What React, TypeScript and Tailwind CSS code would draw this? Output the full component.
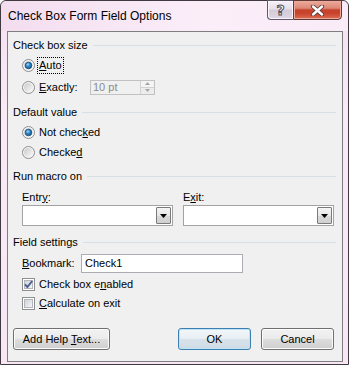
import React from "react";

function Radio({ checked, id }: { checked?: boolean; id: string }) {
  return (
    <svg width="13" height="13" viewBox="0 0 13 13" className="shrink-0">
      <defs>
        <linearGradient id={`rg${id}`} x1="0" y1="0" x2="1" y2="1">
          <stop offset="0" stopColor="#c9c9c9" />
          <stop offset="1" stopColor="#fbfbfb" />
        </linearGradient>
        <radialGradient id={`rd${id}`} cx="0.4" cy="0.35" r="0.7">
          <stop offset="0" stopColor="#9fdcfb" />
          <stop offset="0.45" stopColor="#2e86c8" />
          <stop offset="1" stopColor="#125589" />
        </radialGradient>
      </defs>
      <circle cx="6.5" cy="6.5" r="6" fill="#f5f5f5" stroke="#8d8d8d" />
      <circle cx="6.5" cy="6.5" r="4.6" fill={`url(#rg${id})`} />
      {checked && (
        <circle cx="6.5" cy="6.5" r="3.3" fill={`url(#rd${id})`} stroke="#1b4a73" strokeWidth="0.8" />
      )}
    </svg>
  );
}

function Check({ checked, id }: { checked?: boolean; id: string }) {
  return (
    <svg width="13" height="13" viewBox="0 0 13 13" className="shrink-0">
      <defs>
        <linearGradient id={`cg${id}`} x1="0" y1="0" x2="1" y2="1">
          <stop offset="0" stopColor="#cdd1d6" />
          <stop offset="1" stopColor="#f7f7f7" />
        </linearGradient>
      </defs>
      <rect x="0.5" y="0.5" width="12" height="12" fill="#ffffff" stroke="#8e8f8f" />
      <rect x="2.5" y="2.5" width="8" height="8" fill={`url(#cg${id})`} stroke="#b3b7bd" />
      {checked && (
        <path d="M3 6.3 L5.4 9 L10.2 3" fill="none" stroke="#4a5f8f" strokeWidth="1.9" />
      )}
    </svg>
  );
}

function Header({ text, mt }: { text: string; mt: string }) {
  return (
    <div className={`flex items-center h-[16px] pl-[5px] pr-[6px] ${mt}`}>
      <span className="text-black whitespace-nowrap">{text}</span>
      <div className="flex-1 h-px bg-[#d5dfe5] ml-[5px]" />
    </div>
  );
}

function DownArrow() {
  return (
    <svg width="7" height="4" viewBox="0 0 7 4">
      <path d="M0 0 H7 L3.5 4 Z" fill="#000" />
    </svg>
  );
}

function Combo() {
  return (
    <div className="w-[151px] h-[21px] border border-[#a3a3a3] bg-white flex justify-end p-px">
      <div className="w-[15px] h-full border border-[#7a7a7a] rounded-[1px] bg-[linear-gradient(to_bottom,#f4f4f4,#e8e8e8_50%,#dadada_50%,#d0d0d0)] flex items-center justify-center">
        <DownArrow />
      </div>
    </div>
  );
}

function Btn({ children, w, def }: { children: React.ReactNode; w: string; def?: boolean }) {
  return (
    <div
      className={`${w} h-[22px] rounded-[3px] border flex items-center justify-center ${
        def
          ? "border-[#3c7fb1] bg-[linear-gradient(to_bottom,#f3f7fa,#e7eef3_50%,#d8e2ea_50%,#cfdbe4)] shadow-[inset_0_0_0_1px_#bfe3f7]"
          : "border-[#707070] bg-[linear-gradient(to_bottom,#f2f2f2,#ebebeb_50%,#dddddd_50%,#cfcfcf)] shadow-[inset_0_0_0_1px_#fcfcfc]"
      }`}
    >
      {children}
    </div>
  );
}

export default function App() {
  return (
    <div className="w-[349px] h-[365px] bg-white font-['Liberation_Sans',Arial,sans-serif] text-[11px] leading-none text-black">
      <div className="w-[349px] h-[365px] border border-[#40393f] rounded-t-[6px] bg-[linear-gradient(to_bottom,#f4e0f1,#f9eaf7_30%,#f8e6f5)] flex flex-col">
        {/* Title bar */}
        <div className="h-[30px] flex shrink-0 bg-[linear-gradient(to_right,#f3ddef,#fbeef9_60%,#f9ebf7)] rounded-t-[6px]">
          <div className="pl-[7px] flex items-center h-[29px] text-[12px] text-black">Check Box Form Field Options</div>
          <div className="ml-auto mr-[6px] -mt-px flex self-start">
            <div className="w-[26px] h-[20px] border border-[#5e5868] border-r-0 rounded-bl-[4px] bg-[linear-gradient(to_bottom,#f7f1f7,#e6dee9_45%,#d4cad9_50%,#dfd7e3)] flex items-center justify-center shadow-[inset_0_0_0_1px_#fbf6fb]">
              <span className="text-[14px] font-bold text-white [-webkit-text-stroke:1px_#4c4c5a] font-['DejaVu_Sans',sans-serif] leading-none">?</span>
            </div>
            <div className="w-[49px] h-[20px] border border-[#5e3a36] rounded-br-[4px] bg-[linear-gradient(to_bottom,#ecab9c,#dc8876_40%,#c7412b_50%,#c9452e_70%,#dd6e55)] flex items-center justify-center shadow-[inset_0_0_0_1px_#eea99a]">
              <svg width="15" height="11" viewBox="0 0 15 11">
                <path d="M3 1.5 L12 9.5 M12 1.5 L3 9.5" stroke="#5a3a36" strokeWidth="4.2" strokeLinecap="round" />
                <path d="M3 1.5 L12 9.5 M12 1.5 L3 9.5" stroke="#ffffff" strokeWidth="2.4" strokeLinecap="round" />
              </svg>
            </div>
          </div>
        </div>

        {/* Client */}
        <div className="ml-[6px] mr-[5px] h-[331px] border border-[#7e7e7e] bg-[#f0f0f0] flex flex-col">
          <Header text="Check box size" mt="mt-[5px]" />
          <div className="flex items-center h-[20px] mt-[2px] pl-[14px]">
            <Radio checked id="a" />
            <span className="ml-[2px] border border-dotted border-black px-[1px] py-[2px]">
              <span className="underline underline-offset-[1px]">A</span>uto
            </span>
          </div>
          <div className="flex items-center h-[20px] mt-[2px] pl-[14px]">
            <Radio id="b" />
            <span className="ml-[4px] w-[51px]">
              <span className="underline underline-offset-[1px]">E</span>xactly:
            </span>
            <div className="w-[65px] h-[15px] border border-[#c2c2c2] bg-[#f0f0f0] flex items-center">
              <span className="pl-[2px] text-[#8b8b8b] flex-1">10 pt</span>
              <div className="w-[14px] h-full flex flex-col border-l border-[#d2d2d2]">
                <div className="flex-1 flex items-center justify-center border-b border-[#d2d2d2] bg-[#f4f4f4]">
                  <svg width="5" height="3" viewBox="0 0 5 3"><path d="M0 3 H5 L2.5 0 Z" fill="#a6a6a6" /></svg>
                </div>
                <div className="flex-1 flex items-center justify-center bg-[#ececec]">
                  <svg width="5" height="3" viewBox="0 0 5 3"><path d="M0 0 H5 L2.5 3 Z" fill="#a6a6a6" /></svg>
                </div>
              </div>
            </div>
          </div>

          <Header text="Default value" mt="mt-[7px]" />
          <div className="flex items-center h-[19px] mt-[3px] pl-[14px]">
            <Radio checked id="c" />
            <span className="ml-[4px]">
              Not chec<span className="underline underline-offset-[1px]">k</span>ed
            </span>
          </div>
          <div className="flex items-center h-[20px] pl-[14px]">
            <Radio id="d" />
            <span className="ml-[4px]">
              Checke<span className="underline underline-offset-[1px]">d</span>
            </span>
          </div>

          <Header text="Run macro on" mt="mt-[6px]" />
          <div className="flex mt-[5px] pl-[14px] gap-[10px]">
            <div className="flex flex-col">
              <div className="h-[16px] flex items-center">
                <span>
                  Entr<span className="underline underline-offset-[1px]">y</span>:
                </span>
              </div>
              <Combo />
            </div>
            <div className="flex flex-col">
              <div className="h-[16px] flex items-center">
                <span>
                  E<span className="underline underline-offset-[1px]">x</span>it:
                </span>
              </div>
              <Combo />
            </div>
          </div>

          <Header text="Field settings" mt="mt-[8px]" />
          <div className="flex items-center h-[19px] mt-[4px] pl-[14px]">
            <span className="w-[59px]">
              <span className="underline underline-offset-[1px]">B</span>ookmark:
            </span>
            <div className="w-[162px] h-[19px] border border-[#abadb3] bg-white flex items-center pl-[3px]">
              Check1
            </div>
          </div>
          <div className="flex items-center h-[18px] mt-[2px] pl-[14px]">
            <Check checked id="e" />
            <span className="ml-[4px]">
              Check box e<span className="underline underline-offset-[1px]">n</span>abled
            </span>
          </div>
          <div className="flex items-center h-[18px] mt-[1px] pl-[14px]">
            <Check id="f" />
            <span className="ml-[4px]">
              <span className="underline underline-offset-[1px]">C</span>alculate on exit
            </span>
          </div>

          <div className="flex items-center mt-[16px] pl-[5px] pr-[8px]">
            <Btn w="w-[97px]">
              <span>
                Add Help <span className="underline underline-offset-[1px]">T</span>ext...
              </span>
            </Btn>
            <div className="ml-auto flex gap-[10px]">
              <Btn w="w-[73px]" def>
                <span>OK</span>
              </Btn>
              <Btn w="w-[73px]">
                <span>Cancel</span>
              </Btn>
            </div>
          </div>
        </div>
      </div>
    </div>
  );
}
